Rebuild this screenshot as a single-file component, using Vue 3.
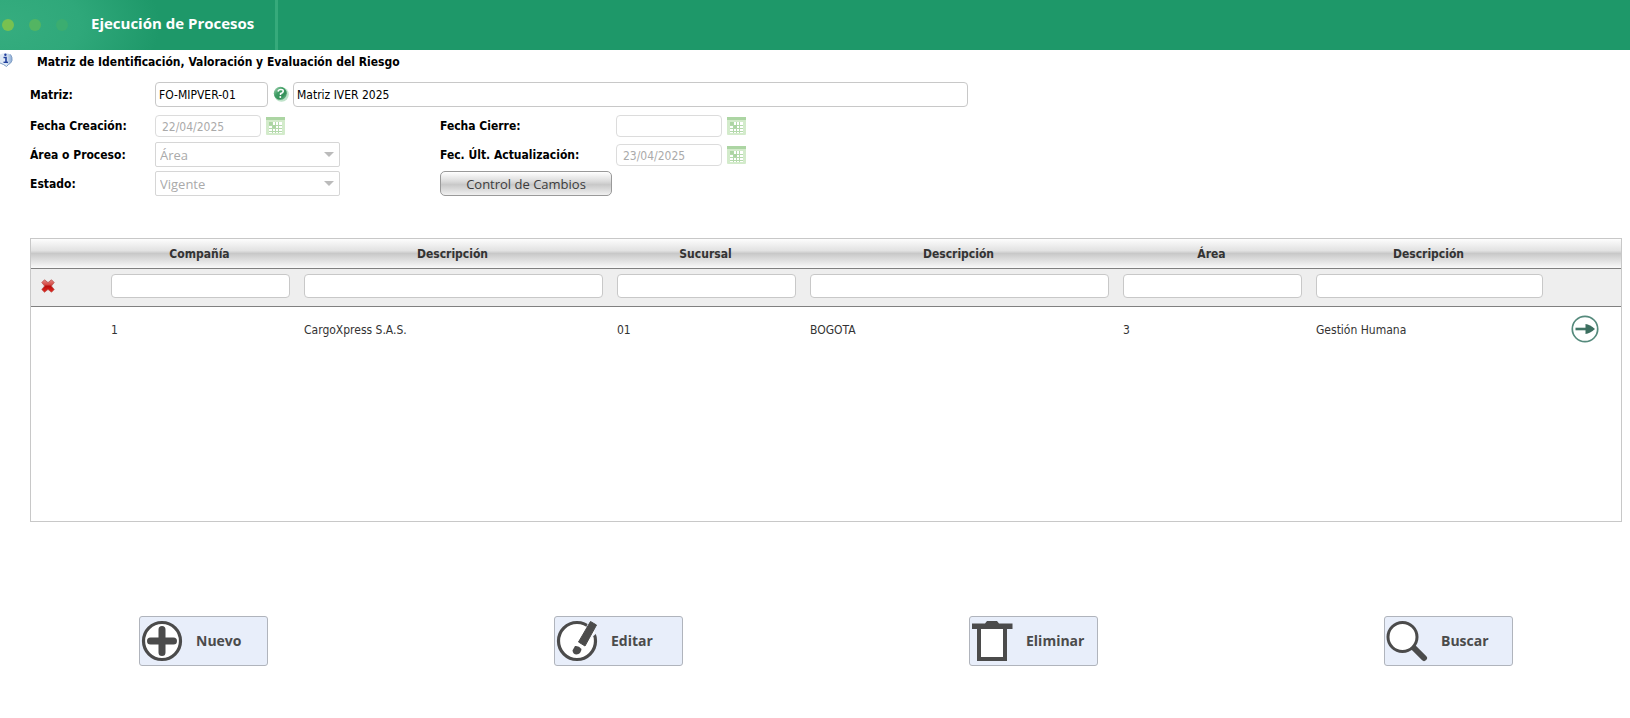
<script setup>
import { ref } from 'vue'

const columns = [
  { label: 'Compañía', value: '1', width: 193 },
  { label: 'Descripción', value: 'CargoXpress S.A.S.', width: 313 },
  { label: 'Sucursal', value: '01', width: 193 },
  { label: 'Descripción', value: 'BOGOTA', width: 313 },
  { label: 'Área', value: '3', width: 193 },
  { label: 'Descripción', value: 'Gestión Humana', width: 241 },
]
const filters = ref(columns.map(() => ''))
const code = ref('FO-MIPVER-01')
const name = ref('Matriz IVER 2025')
const calendarPath = 'M3 8.5h13M3 11.5h13M3 14.5h13M6.5 5v11M9.5 5v11M12.5 5v11'
</script>

<template>
  <div class="page">
    <header class="banner">
      <span class="dot dot-a"></span>
      <span class="dot dot-b"></span>
      <span class="dot dot-c"></span>
      <h1>Ejecución de Procesos</h1>
    </header>

    <main>
      <div class="subtitle">
        <svg class="info" width="13" height="15" viewBox="0 0 13 15" aria-hidden="true">
          <defs>
            <linearGradient id="shield" x1="0" x2="1">
              <stop offset="0" stop-color="#dfe9f5" />
              <stop offset=".5" stop-color="#e3ecf7" />
              <stop offset="1" stop-color="#86a8d4" />
            </linearGradient>
          </defs>
          <path d="M0 1.500 Q5 -1 10.500 1.500 Q12.500 4 12 7.500 Q11 10.500 8.500 11.500 L6.500 13.500 L3.500 11.500 L0 10Z" fill="url(#shield)" />
          <path d="M10.500 1.500 Q12.500 4 12 7.500 Q11 10.500 8.500 11.500 L6.500 13.500 L3.500 11.500 L0 10" fill="none" stroke="#7f9dc4" />
          <path d="M3.500 4.500H6V9" stroke="#203f9c" stroke-width="1.600" fill="none" />
          <path d="M3.500 9.300h4.500" stroke="#203f9c" stroke-width="1.400" />
          <circle cx="5.400" cy="1.700" r="1.200" fill="#203f9c" />
        </svg>
        <h2>Matriz de Identificación, Valoración y Evaluación del Riesgo</h2>
      </div>

      <form class="form" @submit.prevent>
        <div class="row first">
          <label for="code">Matriz:</label>
          <input id="code" v-model="code" class="field code" />
          <button class="icon help" type="button" aria-label="Ayuda">
            <svg width="16" height="17" viewBox="0 0 16 17">
              <defs>
                <linearGradient id="ball" x1="0" y1="0" x2="1" y2="1">
                  <stop offset="0" stop-color="#b4dcc0" />
                  <stop offset=".4" stop-color="#3f9d64" />
                  <stop offset=".7" stop-color="#348f58" />
                  <stop offset="1" stop-color="#8fd0a6" />
                </linearGradient>
              </defs>
              <circle cx="8.500" cy="8.500" r="7.300" fill="#bfe3ca" />
              <circle cx="7.300" cy="7.300" r="6.500" fill="url(#ball)" />
              <path d="M5 5.500q.5-2 2.900-2T10.200 5.300Q10 6.800 7.600 7.600V9" fill="none" stroke="#fff" stroke-width="1.600" />
              <circle cx="7.300" cy="11" r="1" fill="#fff" />
            </svg>
          </button>
          <input v-model="name" class="field name" aria-label="Nombre de la matriz" />
        </div>

        <div class="row">
          <label for="created">Fecha Creación:</label>
          <div class="control">
            <input id="created" class="date" value="22/04/2025" disabled />
            <button class="icon" type="button" aria-label="Calendario" disabled>
              <svg width="19" height="18" viewBox="0 0 19 18">
                <rect width="19" height="18" rx="1" fill="#d3ebcb" />
                <rect width="19" height="3" fill="#acd5a3" />
                <rect x="3" y="5" width="13" height="11" fill="#fff" />
                <path :d="calendarPath" stroke="#b4d9ac" />
                <path d="M3 5h3.500v3H10v3H6.500V8H3z" fill="#acd5a3" />
              </svg>
            </button>
          </div>
          <label class="second" for="closed">Fecha Cierre:</label>
          <input id="closed" class="date" disabled />
          <button class="icon" type="button" aria-label="Calendario" disabled>
            <svg width="19" height="18" viewBox="0 0 19 18">
              <rect width="19" height="18" rx="1" fill="#d3ebcb" />
              <rect width="19" height="3" fill="#acd5a3" />
              <rect x="3" y="5" width="13" height="11" fill="#fff" />
              <path :d="calendarPath" stroke="#b4d9ac" />
              <path d="M3 5h3.500v3H10v3H6.500V8H3z" fill="#acd5a3" />
            </svg>
          </button>
        </div>

        <div class="row">
          <label for="area">Área o Proceso:</label>
          <div class="control">
            <div class="select"><select id="area" disabled><option>Área</option></select></div>
          </div>
          <label class="second" for="updated">Fec. Últ. Actualización:</label>
          <input id="updated" class="date" value="23/04/2025" disabled />
          <button class="icon" type="button" aria-label="Calendario" disabled>
            <svg width="19" height="18" viewBox="0 0 19 18">
              <rect width="19" height="18" rx="1" fill="#d3ebcb" />
              <rect width="19" height="3" fill="#acd5a3" />
              <rect x="3" y="5" width="13" height="11" fill="#fff" />
              <path :d="calendarPath" stroke="#b4d9ac" />
              <path d="M3 5h3.500v3H10v3H6.500V8H3z" fill="#acd5a3" />
            </svg>
          </button>
        </div>

        <div class="row">
          <label for="state">Estado:</label>
          <div class="control">
            <div class="select"><select id="state" disabled><option>Vigente</option></select></div>
          </div>
          <button class="changes" type="button">Control de Cambios</button>
        </div>
      </form>

      <div class="grid">
        <table>
          <colgroup>
            <col width="74" />
            <col v-for="(c, i) in columns" :key="i" :width="c.width" />
            <col width="70" />
          </colgroup>
          <thead>
            <tr class="heads">
              <th></th>
              <th v-for="(c, i) in columns" :key="i" scope="col">{{ c.label }}</th>
              <th></th>
            </tr>
            <tr class="filters">
              <td class="clear">
                <button class="icon" type="button" aria-label="Limpiar filtros">
                  <svg width="14" height="14" viewBox="0 0 14 14">
                    <defs>
                      <linearGradient id="cross" x1="0" y1="0" x2="0" y2="1">
                        <stop offset="0" stop-color="#e58a86" />
                        <stop offset=".42" stop-color="#d4453f" />
                        <stop offset=".5" stop-color="#b80d0d" />
                        <stop offset="1" stop-color="#e32a20" />
                      </linearGradient>
                    </defs>
                    <path d="M3.500 .8 7 3.600 10.500 .8 13.200 3.500 10.400 7 13.200 10.500 10.500 13.200 7 10.400 3.500 13.200 .8 10.500 3.600 7 .8 3.500Z" fill="url(#cross)" stroke="#b9504d" stroke-width=".8" stroke-linejoin="round" />
                  </svg>
                </button>
              </td>
              <td v-for="(c, i) in columns" :key="i">
                <input v-model="filters[i]" class="field" :aria-label="'Filtrar ' + c.label" />
              </td>
              <td></td>
            </tr>
          </thead>
          <tbody>
            <tr>
              <td></td>
              <td v-for="(c, i) in columns" :key="i">{{ c.value }}</td>
              <td class="go">
                <button class="icon" type="button" aria-label="Abrir">
                  <svg width="28" height="28" viewBox="0 0 28 28">
                    <circle cx="14" cy="14" r="12.700" fill="#fff" stroke="#558a7c" stroke-width="1.700" />
                    <path d="M4.500 14H16" stroke="#417566" stroke-width="2.600" />
                    <path d="M14.500 9 Q19 9.500 24 14 Q19 18.500 14.500 19Z" fill="#3c6f60" />
                  </svg>
                </button>
              </td>
            </tr>
          </tbody>
        </table>
      </div>

      <div class="actions">
        <button type="button">
          <svg width="42" height="42" viewBox="0 0 42 42">
            <circle cx="21" cy="21" r="18.500" fill="#fff" stroke="#4b4b4b" stroke-width="3.200" />
            <path d="M21 9.500v23M9.500 21h23" stroke="#4b4b4b" stroke-width="7" stroke-linecap="round" />
          </svg>
          <span>Nuevo</span>
        </button>
        <button type="button">
          <svg width="42" height="42" viewBox="0 0 42 42">
            <circle cx="21" cy="21" r="18.500" fill="#fff" stroke="#4b4b4b" stroke-width="3.200" />
            <path d="M27 14 33 1 42 1 41 13 34 19Z" fill="#e8eefa" />
            <path d="M26 15 31 7 39 12 32 22Z" fill="#fff" />
            <path d="M34.500 1.500 40.500 5 29 26 22.500 22Z" fill="#4b4b4b" stroke="#4b4b4b" stroke-linejoin="round" />
            <path d="M19 26 Q23 25.500 25.500 29 Q25 34 20.500 34.500 Q17 34.500 16.500 30.500Z" fill="#4b4b4b" />
          </svg>
          <span>Editar</span>
        </button>
        <button type="button">
          <svg width="42" height="42" viewBox="0 0 42 42">
            <path d="M8 7h26v32H8z" fill="#fff" stroke="#4b4b4b" stroke-width="4" />
            <path d="M1 3.500h13l2-2.500h10l2 2.500h13.500v5.500H1z" fill="#4b4b4b" />
          </svg>
          <span>Eliminar</span>
        </button>
        <button type="button">
          <svg width="42" height="42" viewBox="0 0 42 42">
            <path d="M28 28 38 38" stroke="#4b4b4b" stroke-width="6" stroke-linecap="round" />
            <circle cx="16.500" cy="17" r="14.500" fill="#fff" stroke="#4b4b4b" stroke-width="3" />
          </svg>
          <span>Buscar</span>
        </button>
      </div>
    </main>
  </div>
</template>

<style>
body {
  background: #fff;
}
</style>

<style scoped>
.page {
  font-family: Tahoma, "DejaVu Sans Condensed", "Noto Sans", sans-serif;
  font-size: 12px;
  color: #000;
}
.page * {
  box-sizing: border-box;
}
.banner {
  display: flex;
  align-items: center;
  height: 50px;
  padding-left: 2px;
  background: radial-gradient(ellipse 160px 90px at 0 25px, #36ad7f 0%, #2fa87a 50%, #1e9869 100%) #1e9869;
}
.dot {
  width: 12px;
  height: 12px;
  margin-right: 15px;
  border-radius: 50%;
  background: #78c150;
}
.dot-b {
  background: #53b562;
}
.dot-c {
  background: #3bad70;
}
h1 {
  display: flex;
  align-items: center;
  width: 187px;
  height: 50px;
  margin: 0 0 0 8px;
  padding-bottom: 4px;
  border-right: 3px solid #36aa7b;
  color: #fff;
  font: 700 15px "Open Sans", sans-serif;
  white-space: nowrap;
}
.subtitle {
  display: flex;
  height: 24px;
  padding-top: 3px;
}
.info {
  flex: none;
}
h2 {
  margin: 0 0 0 24px;
  font-size: 12px;
  line-height: 18px;
}
.form {
  padding: 8px 0 0 30px;
}
.row {
  display: flex;
  align-items: center;
  height: 29px;
}
.row.first {
  padding-bottom: 5px;
}
label {
  width: 125px;
  padding-top: 1px;
  font-weight: 700;
}
.second {
  width: 176px;
}
.control {
  display: flex;
  align-items: center;
  width: 285px;
}
.field {
  width: 100%;
  height: 25px;
  padding: 2px 3px 0;
  border: 1px solid #c8c8c8;
  border-radius: 4px;
  background: #fff;
  color: #000;
  font: inherit;
}
.code {
  width: 113px;
}
.name {
  width: 675px;
}
.icon {
  display: block;
  padding: 0;
  border: 0;
  background: none;
}
.icon svg {
  display: block;
}
.help {
  margin: 0 4px 0 5px;
}
.date {
  width: 106px;
  height: 22px;
  margin-right: 5px;
  padding: 3px 6px 0;
  border: 1px solid #dcdcdc;
  border-radius: 4px;
  background: #fff;
  color: #aaa;
  font: inherit;
}
.select {
  position: relative;
  width: 185px;
}
.select::after {
  content: "";
  position: absolute;
  top: 10px;
  right: 6px;
  border: solid transparent;
  border-width: 5px 5px 0;
  border-top-color: #bbb;
}
select {
  display: block;
  width: 100%;
  height: 25px;
  padding: 1px 4px 0;
  border: 1px solid #d6d6d6;
  border-radius: 2px;
  background: #fff;
  color: #aaa;
  opacity: 1;
  appearance: none;
  font: 13px "Open Sans", sans-serif;
}
.changes {
  width: 172px;
  height: 25px;
  padding: 0;
  border: 1px solid #999;
  border-radius: 5px;
  background: linear-gradient(#fff, #dcdcdc 40%, #c8c8c8 55%, #f0f0f0);
  color: #3c3c3c;
  font: 13px "Open Sans", sans-serif;
}
.grid {
  height: 284px;
  margin: 40px 8px 0 30px;
  border: 1px solid #c8c8c8;
  color: #333;
}
table {
  width: 100%;
  table-layout: fixed;
  border-collapse: collapse;
}
th,
td {
  padding: 0 8px 0 6px;
  text-align: left;
}
.heads {
  height: 29px;
  background: linear-gradient(#fdfdfd, #e2e2e2 40%, #c8c8c8 50%, #fafafa);
}
th {
  padding-top: 1px;
  padding-right: 10px;
  border-bottom: 1px solid #808080;
  text-align: center;
}
.filters {
  height: 38px;
  background: #eee;
}
.filters td {
  padding-bottom: 2px;
  border-bottom: 1px solid #808080;
}
.filters .clear {
  padding-left: 10px;
}
.filters .field {
  display: block;
  height: 24px;
}
tbody td {
  height: 45px;
  padding-top: 2px;
}
tbody .go {
  padding: 0 0 0 20px;
}
.actions {
  display: flex;
  justify-content: space-between;
  margin-top: 94px;
  padding: 0 117px 0 139px;
}
.actions button {
  display: flex;
  align-items: center;
  width: 129px;
  height: 50px;
  padding: 0 0 0 1px;
  border: 1px solid #b0b4bc;
  border-radius: 3px;
  background: #e8eefa;
  color: #4b4b4b;
  font: 700 14px "Open Sans", sans-serif;
}
.actions span {
  margin-left: 13px;
  padding-bottom: 2px;
}
</style>
